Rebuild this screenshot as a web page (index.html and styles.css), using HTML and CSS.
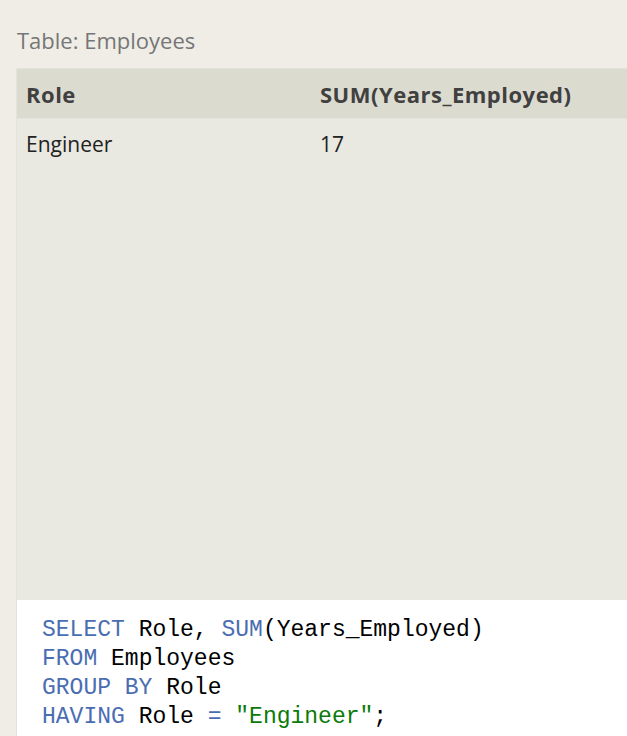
FILE: index.html
```html
<!DOCTYPE html>
<html>
<head>
<meta charset="utf-8">
<link rel="stylesheet" href="styles.css">
</head>
<body>
<div class="page">
  <div class="title">Table: Employees</div>
  <div class="panel">
    <div class="grid">
      <div class="row head">
        <div class="cell c1">Role</div>
        <div class="cell c2">SUM(Years_Employed)</div>
      </div>
      <div class="row">
        <div class="cell c1">Engineer</div>
        <div class="cell c2">17</div>
      </div>
    </div>
    <pre class="code"><span class="kw">SELECT</span> Role, <span class="kw">SUM</span>(Years_Employed)
<span class="kw">FROM</span> Employees
<span class="kw">GROUP BY</span> Role
<span class="kw">HAVING</span> Role <span class="kw">=</span> <span class="str">"Engineer"</span>;</pre>
  </div>
</div>
</body>
</html>
```
FILE: styles.css
```css
html, body {
  margin: 0;
  padding: 0;
  background: #efede6;
  overflow: hidden;
}
.page {
  width: 627px;
  height: 736px;
  overflow: hidden;
  font-family: "Open Sans", "Noto Sans", sans-serif;
}
.title {
  padding: 25px 0 0 17px;
  height: 68px;
  box-sizing: border-box;
  font-size: 22px;
  line-height: 30px;
  color: #767676;
}
.panel {
  margin-left: 16px;
  width: 640px;
  border-left: 1px solid #e3e2db;
  border-top: 1px solid #e3e2db;
}
.grid {
  background: #e9e8e1;
  height: 531px;
}
.row {
  display: grid;
  grid-template-columns: 294px 1fr;
  height: 49px;
  align-items: center;
}
.row.head {
  background: #dcdbd0;
  border-bottom: 1px solid #e3e2db;
  font-weight: 700;
}
.cell {
  padding-left: 9px;
  font-size: 21px;
  color: #222;
}
.head .cell {
  color: #404040;
  font-size: 22px;
  letter-spacing: 0.5px;
}
.code {
  margin: 0;
  background: #fff;
  padding: 16px 0 0 25px;
  height: 140px;
  box-sizing: border-box;
  font-family: "Liberation Mono", "DejaVu Sans Mono", monospace;
  font-size: 23px;
  line-height: 29px;
  color: #000;
}
.kw { color: #4a6db2; }
.str { color: #0a7a0a; }
```
